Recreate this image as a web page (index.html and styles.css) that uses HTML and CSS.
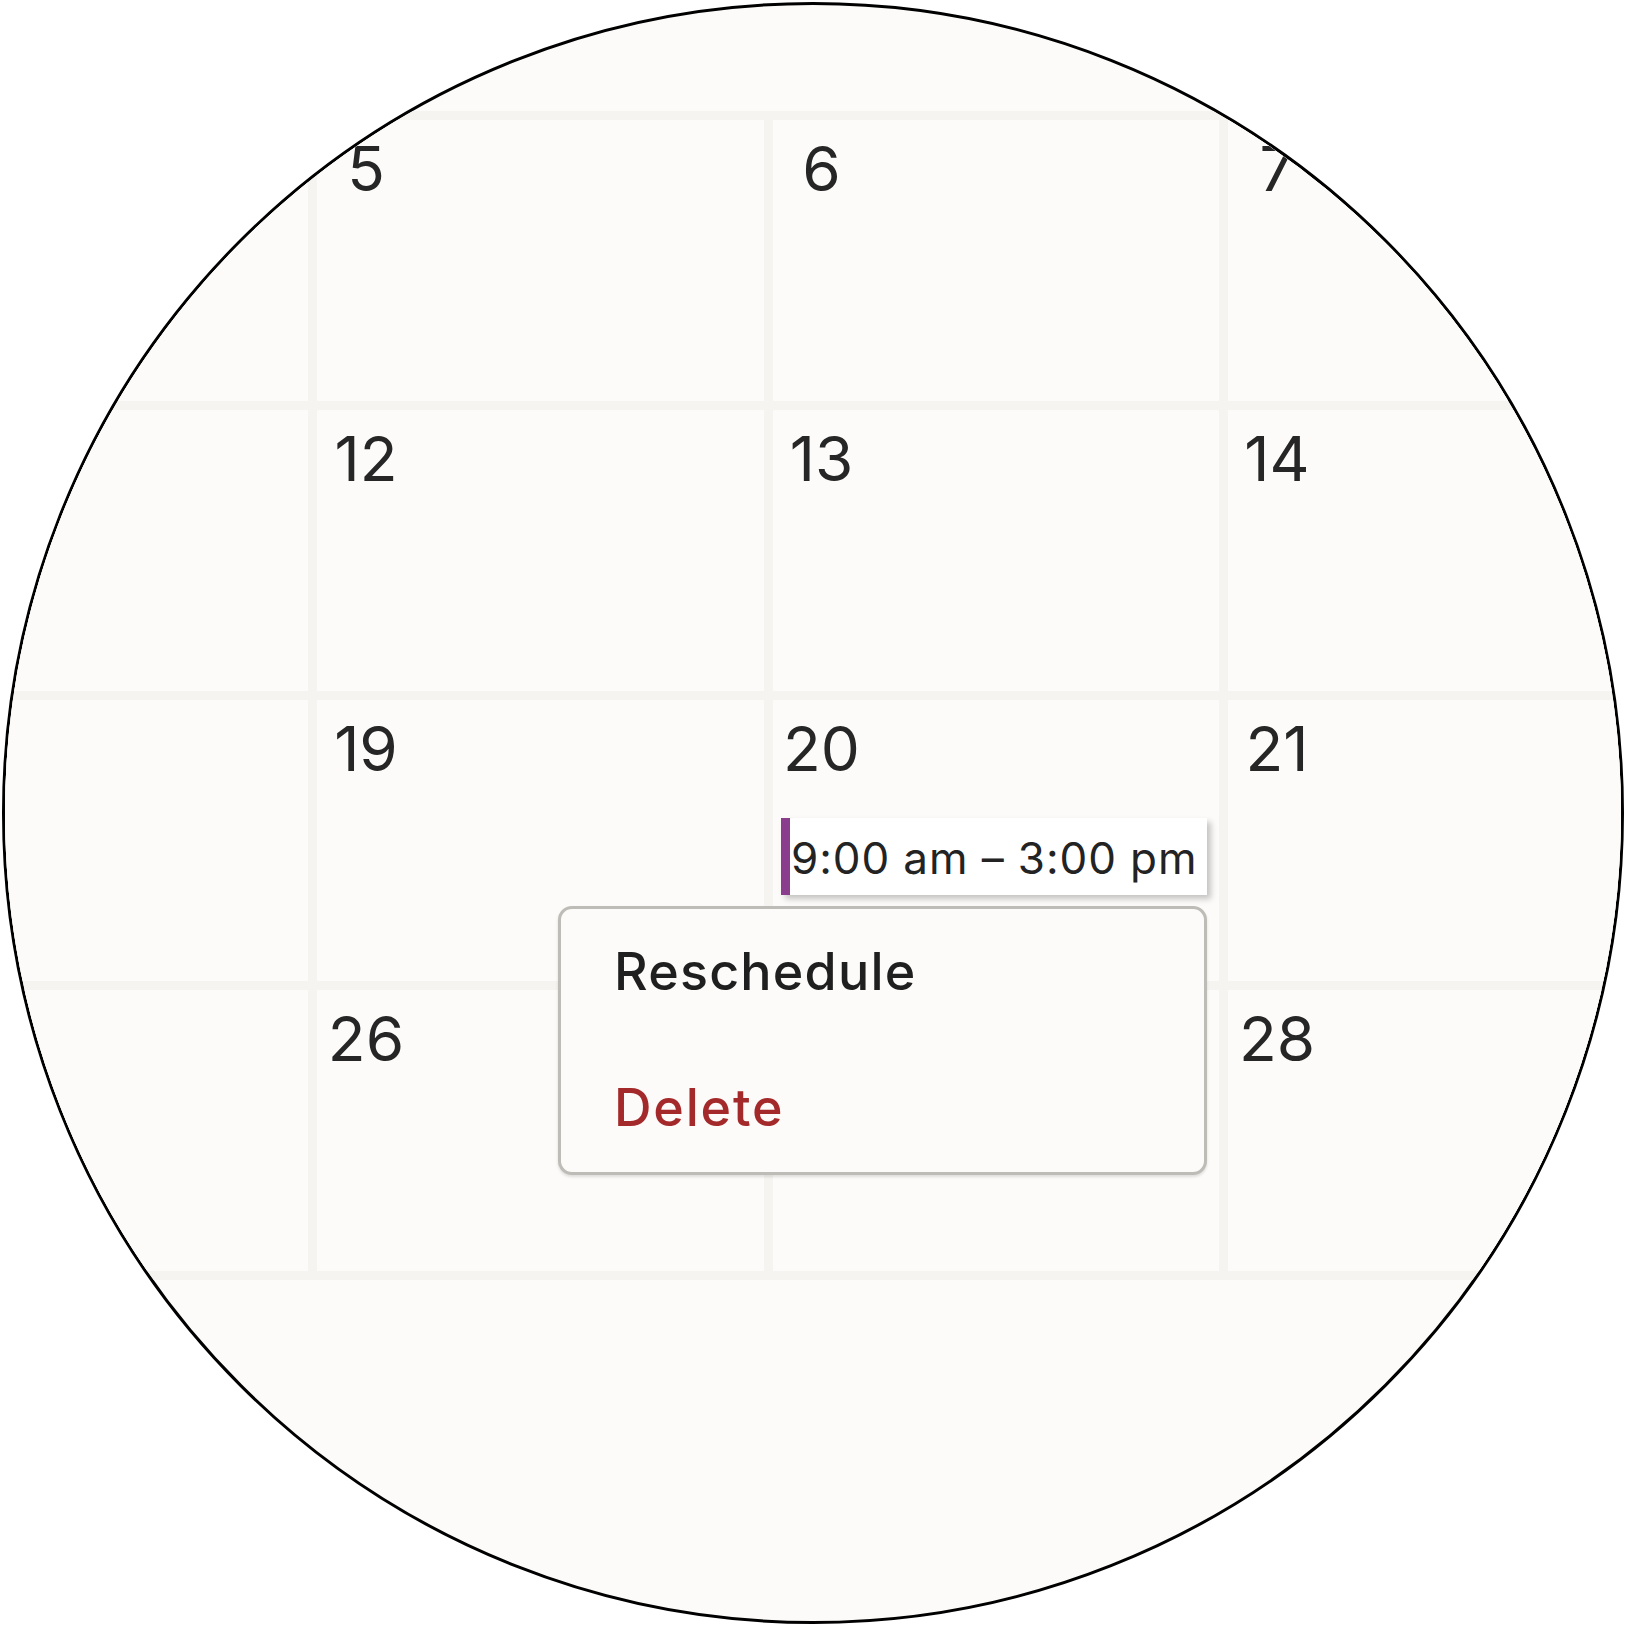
FILE: index.html
```html
<!DOCTYPE html>
<html lang="en">
<head>
<meta charset="utf-8">
<title>Calendar – event menu</title>
<link rel="stylesheet" href="styles.css">
</head>
<body>
<div class="lens">
  <div class="month">
    <div class="cell"></div>
    <div class="cell"><div class="day-num">5</div></div>
    <div class="cell"><div class="day-num">6</div></div>
    <div class="cell"><div class="day-num">7</div></div>
    <div class="cell"></div>

    <div class="cell"></div>
    <div class="cell"><div class="day-num">12</div></div>
    <div class="cell"><div class="day-num">13</div></div>
    <div class="cell"><div class="day-num">14</div></div>
    <div class="cell"></div>

    <div class="cell"></div>
    <div class="cell"><div class="day-num">19</div></div>
    <div class="cell">
      <div class="day-num">20</div>
      <div class="event">
        <span class="event-time">9:00 am – 3:00 pm</span>
        <div class="menu">
          <div class="menu-item">Reschedule</div>
          <div class="menu-item danger">Delete</div>
        </div>
      </div>
    </div>
    <div class="cell"><div class="day-num">21</div></div>
    <div class="cell"></div>

    <div class="cell"></div>
    <div class="cell"><div class="day-num">26</div></div>
    <div class="cell"><div class="day-num">27</div></div>
    <div class="cell"><div class="day-num">28</div></div>
    <div class="cell"></div>
  </div>
</div>
</body>
</html>
```

FILE: styles.css
```css
* {
  box-sizing: border-box;
}

html, body {
  margin: 0;
  padding: 0;
  background: #ffffff;
}

body {
  font-family: Inter, "Noto Sans", "DejaVu Sans", sans-serif;
  color: #262626;
}

.lens {
  width: 1622px;
  height: 1622px;
  margin: 2px;
  border: 3px solid #000000;
  border-radius: 50%;
  overflow: hidden;
  background: #fcfbf9;
}

.month {
  display: grid;
  grid-template-columns: repeat(5, 446.5px);
  grid-auto-rows: 281px;
  gap: 9px;
  padding: 9px;
  width: max-content;
  margin-top: 106px;
  margin-left: -152.5px;
  background: #f5f4f1;
}

.cell {
  background: #fcfbf9;
  display: flex;
  flex-direction: column;
  align-items: flex-start;
}

.day-num {
  width: 98px;
  padding-top: 18px;
  text-align: center;
  font-size: 62px;
  line-height: 62px;
  font-weight: 400;
  color: #262626;
}

.event {
  position: relative;
  align-self: stretch;
  height: 77px;
  margin: 38px 12px 0 8.5px;
  display: flex;
  align-items: center;
  padding-top: 2px;
  background: #ffffff;
  border-left: 9px solid #8a3c8d;
  box-shadow: 4px 4px 6px rgba(0, 0, 0, 0.22);
}

.event-time {
  padding-left: 1px;
  font-size: 44px;
  letter-spacing: 0.9px;
  color: #232323;
  white-space: nowrap;
}

.menu {
  position: absolute;
  top: calc(100% + 11px);
  right: 0;
  width: 649px;
  display: flex;
  flex-direction: column;
  gap: 84px;
  padding: 37px 0 38px 53px;
  background: #fcfbf9;
  border: 3px solid #bebcb6;
  border-radius: 14px;
  box-shadow: 0 2px 3px rgba(0, 0, 0, 0.12);
}

.menu-item {
  font-size: 52px;
  line-height: 52px;
  font-weight: 500;
  letter-spacing: 1.2px;
  color: #1f1f1f;
  white-space: nowrap;
}

.menu-item.danger {
  color: #a4292a;
  letter-spacing: 1.8px;
}
```
